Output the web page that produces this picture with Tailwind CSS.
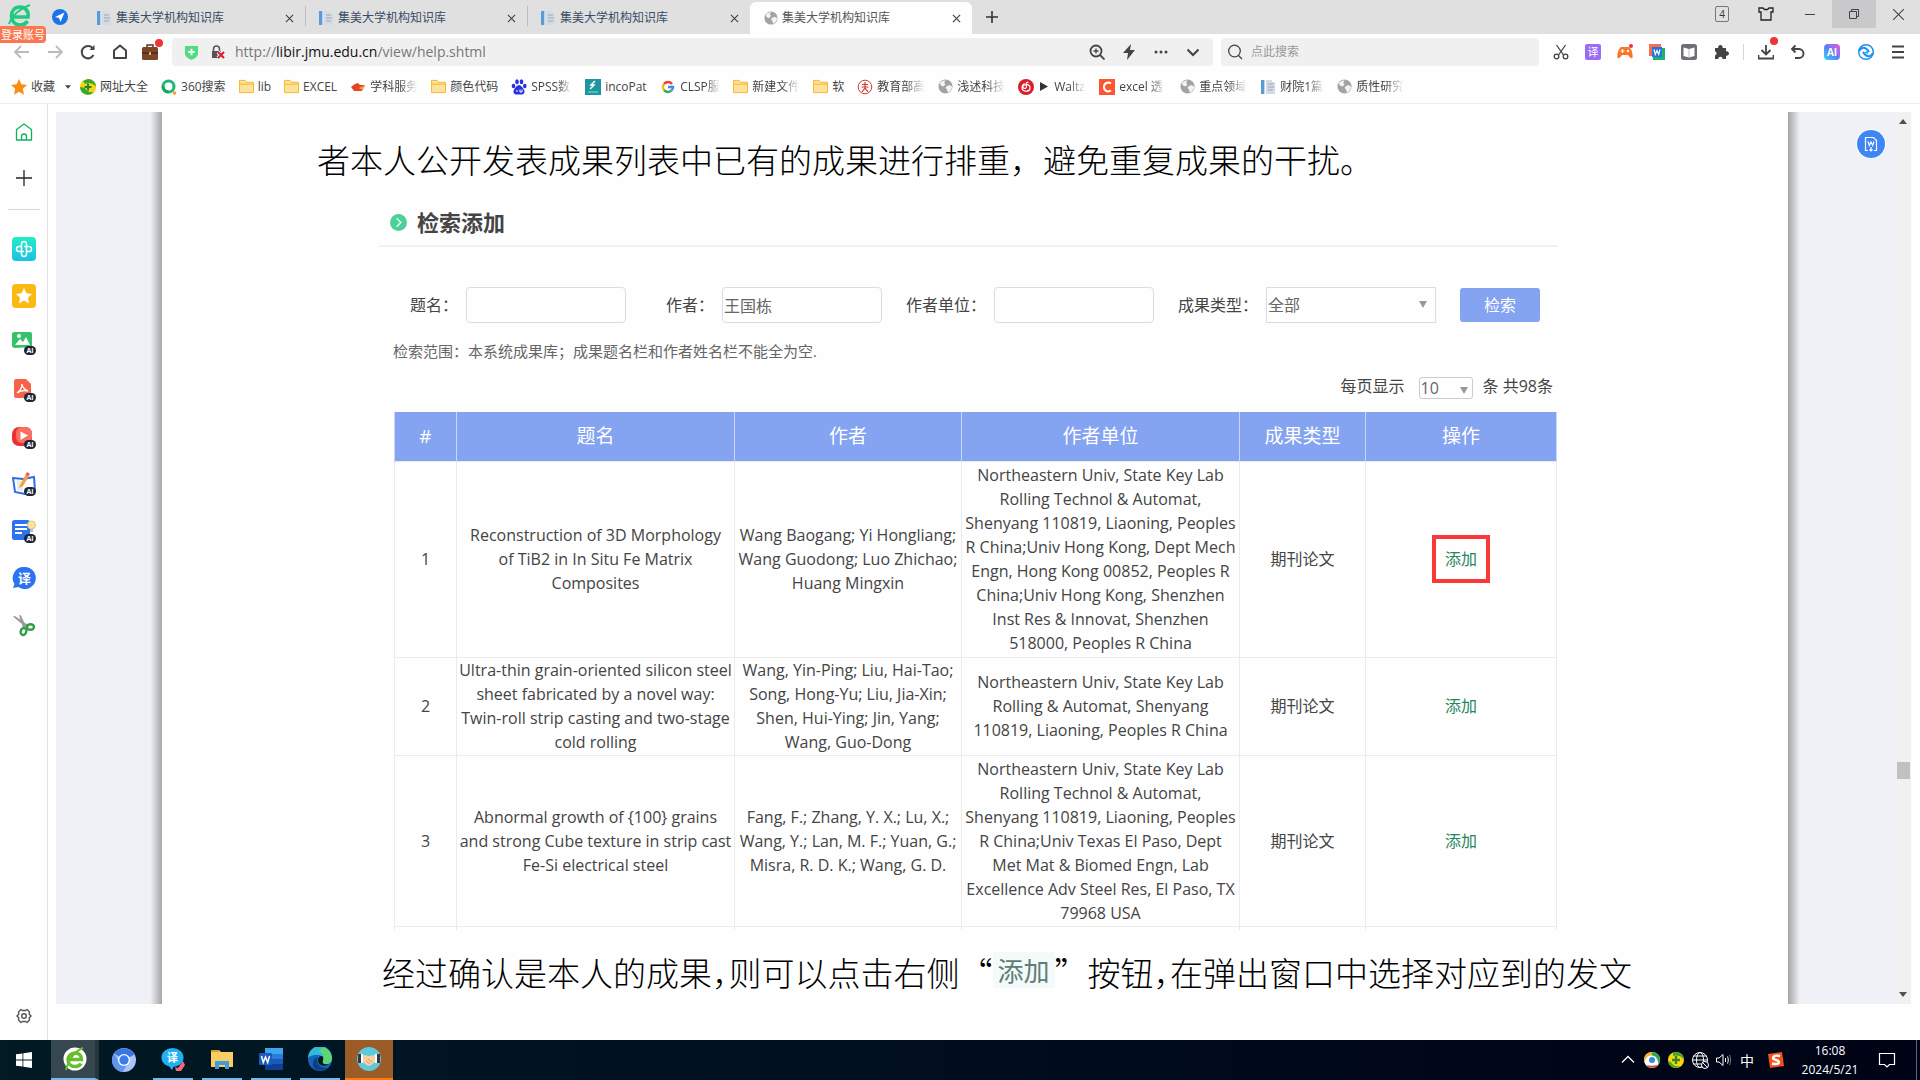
<!DOCTYPE html>
<html lang="zh-CN">
<head>
  <meta charset="UTF-8">
  <meta name="viewport" content="width=device-width, initial-scale=1.0">
  <title>集美大学机构知识库</title>
  <script src="https://cdn.jsdelivr.net/npm/@tailwindcss/browser@4"></script>
</head>
<body class="flex h-screen flex-col overflow-hidden bg-[#fefefe] font-['Open_Sans','Noto_Sans_CJK_SC',sans-serif] text-[#444]">

  <!-- Shared icons -->
  <svg class="hidden">
    <symbol id="i-doc" viewBox="0 0 16 16">
      <path d="M1 1h3v14H1z" fill="#5b9bd5"/><path d="M4 1h1v14H4z" fill="#bcd5ee"/>
      <path d="M6 1h6v2h3v12H6z" fill="#d3dce4"/><path d="M8 5h5M8 8h6M8 11h5" stroke="#98a9b8"/>
    </symbol>
    <symbol id="i-globe" viewBox="0 0 16 16">
      <circle cx="8" cy="8" r="7.500" fill="#a3a3a3"/>
      <path d="M2 4c2-2 4-2.500 6-2.500L6.500 4 8 5.500 6 8 3 7zM9 8l3-1.500 3 1.500c0 3-2 5.500-4.500 6.500L9.500 11 8 9.500z" fill="#f4f4f4"/>
    </symbol>
    <symbol id="i-folder" viewBox="0 0 16 16">
      <path d="M.5 1.500h6l1.500 2h7.500v11H.5z" fill="#fce29a" stroke="#f5b427"/><path d="M.5 5.500h15" stroke="#f5b427"/>
    </symbol>
    <symbol id="i-close" viewBox="0 0 10 10">
      <path d="M1 1l8 8M9 1L1 9" stroke="#444" stroke-width="1.300"/>
    </symbol>
    <symbol id="i-caret" viewBox="0 0 10 6"><path d="M0 0h10L5 6z" fill="currentColor"/></symbol>
  </svg>

  <!-- Tabs -->
  <header class="flex h-[34px] shrink-0 bg-[#e0e0e0] text-[12px] leading-4">
    <div class="relative flex w-[83px] shrink-0 items-center">
      <svg class="absolute left-2 top-1 size-6" viewBox="0 0 24 24" fill="none">
        <path d="M4 13h16c1-6-3-10-8-10-5.500 0-8.500 4-8.500 9S7 21 12 21c4 0 6-1.500 7.500-4" stroke="#1fca7f" stroke-width="3.600"/>
        <path d="M1 20C4 11 13 4 22 1" stroke="#1fca7f" stroke-width="2"/>
      </svg>
      <a href="#" class="absolute left-0 top-[26px] z-10 h-[17px] rounded-r-sm bg-[#fa774f] px-px text-[11px] leading-[17px] text-white">登录账号</a>
      <svg class="absolute left-[52px] top-[9px] size-4" viewBox="0 0 16 16">
        <circle cx="8" cy="8" r="8" fill="#1b73e8"/><path d="M12.500 3.500L3 8l4 1 1.500 4z" fill="#fff"/>
      </svg>
    </div>
    <nav class="flex items-end">
      <a href="#" class="flex h-8 w-[222px] items-center pl-[13px] pr-[11px]"><svg class="size-4 shrink-0"><use href="#i-doc"/></svg><span class="ml-1 flex-1 text-[#3b4a66]">集美大学机构知识库</span><svg class="size-[9px]"><use href="#i-close"/></svg></a>
      <span class="mb-2 -mr-px h-5 w-px bg-[#bdbdbd]"></span>
      <a href="#" class="flex h-8 w-[222px] items-center pl-[13px] pr-[11px]"><svg class="size-4 shrink-0"><use href="#i-doc"/></svg><span class="ml-1 flex-1 text-[#3b4a66]">集美大学机构知识库</span><svg class="size-[9px]"><use href="#i-close"/></svg></a>
      <span class="mb-2 -mr-px h-5 w-px bg-[#bdbdbd]"></span>
      <a href="#" class="flex h-8 w-[223px] items-center pl-[13px] pr-[11px]"><svg class="size-4 shrink-0"><use href="#i-doc"/></svg><span class="ml-1 flex-1 text-[#3b4a66]">集美大学机构知识库</span><svg class="size-[9px]"><use href="#i-close"/></svg></a>
      <a href="#" class="flex h-8 w-[222px] items-center rounded-t-md bg-[#fefefe] pl-[14px] pr-[11px]"><svg class="size-[14px] shrink-0"><use href="#i-globe"/></svg><span class="ml-1 flex-1 text-[#555]">集美大学机构知识库</span><svg class="size-[9px]"><use href="#i-close"/></svg></a>
    </nav>
    <button class="ml-3 flex items-center" aria-label="新标签页"><svg class="size-4" viewBox="0 0 16 16"><path d="M8 2v12M2 8h12" stroke="#333" stroke-width="1.600"/></svg></button>
    <div class="ml-auto flex h-7 items-center">
      <button class="flex w-11 justify-center"><span class="h-4 w-[14px] rounded-xs border border-[#777] text-center text-[10px] leading-[14px] text-[#333]">4</span></button>
      <button class="flex w-11 justify-center" aria-label="皮肤"><svg class="h-[14px] w-4" viewBox="0 0 16 14" fill="none" stroke="#222" stroke-width="1.300"><path d="M1 1h4l1.500 1.500h3L11 1h4v4h-2v8H3V5H1z"/></svg></button>
      <button class="flex w-11 justify-center" aria-label="最小化"><svg class="size-[10px]" viewBox="0 0 10 10"><path d="M0 5.500h10" stroke="#444"/></svg></button>
      <button class="flex h-7 w-11 items-center justify-center bg-[#c9c9cb]" aria-label="还原"><svg class="size-[10px]" viewBox="0 0 10 10" fill="none" stroke="#444"><path d="M.5 2.500h7v7h-7zM2.500 2.500v-2h7v7h-2"/></svg></button>
      <button class="flex w-11 justify-center" aria-label="关闭"><svg class="size-[11px]" viewBox="0 0 10 10"><path d="M0 0l10 10M10 0L0 10" stroke="#444"/></svg></button>
    </div>
  </header>

  <!-- Address bar -->
  <div class="flex h-9 shrink-0 items-center pr-[6px]">
    <div class="flex items-center gap-[15px] pl-[13px]">
      <button aria-label="后退"><svg class="size-[18px]" viewBox="0 0 18 18" fill="none" stroke="#bbb" stroke-width="1.800"><path d="M16 9H2M8 3L2 9l6 6"/></svg></button>
      <button aria-label="前进"><svg class="size-[18px]" viewBox="0 0 18 18" fill="none" stroke="#bbb" stroke-width="1.800"><path d="M2 9h14M10 3l6 6-6 6"/></svg></button>
      <button aria-label="刷新"><svg class="size-[18px]" viewBox="0 0 18 18" fill="none" stroke="#444" stroke-width="2"><path d="M14.500 12A6.200 6.200 0 1 1 14 5.500"/><path d="M15.500 2v5h-5z" fill="#444" stroke="none"/></svg></button>
      <button class="-ml-px" aria-label="主页"><svg class="size-[18px]" viewBox="0 0 18 18" fill="none" stroke="#444" stroke-width="2"><path d="M3 15V7.500L9 2.500l6 5V15z" stroke-linejoin="round"/></svg></button>
      <button class="relative -ml-[3px]" aria-label="工具箱">
        <svg class="size-[18px]" viewBox="0 0 18 18"><path d="M6 5V2h6v3" fill="none" stroke="#5e3320" stroke-width="1.500"/><rect x="1" y="4" width="16" height="13" rx="1.500" fill="#7b452c"/><path d="M1 9h16v2H1z" fill="#55301f"/><path d="M8 9h2v3H8z" fill="#e3b55c"/></svg>
        <span class="absolute -right-1 -top-1 size-2 rounded-full bg-[#f03434]"></span>
      </button>
    </div>
    <div class="ml-[13px] flex h-7 flex-1 items-center rounded-[4px] bg-[#f0f0f0] pl-3 pr-3">
      <svg class="size-[15px]" viewBox="0 0 16 16"><path d="M1 1h14v8c0 3-3 5-7 7-4-2-7-4-7-7z" fill="#4fdc83"/><path d="M8 4v7M4.500 7.500h7" stroke="#fff" stroke-width="2"/></svg>
      <svg class="ml-3 size-[14px]" viewBox="0 0 14 14"><path d="M2.500 6V4a3 3 0 0 1 6 0v2" fill="none" stroke="#555" stroke-width="1.500"/><path d="M1 6h9v7H1z" fill="#555"/><path d="M7 7l6 6M13 7l-6 6" stroke="#f0f0f0" stroke-width="4"/><path d="M7 7l6 6M13 7l-6 6" stroke="#d9202a" stroke-width="2"/></svg>
      <span class="ml-[10px] text-[14px] leading-5 text-[#777]">http://<span class="text-[#111]">libir.jmu.edu.cn</span>/view/help.shtml</span>
      <div class="ml-auto flex items-center gap-4">
        <svg class="size-4" viewBox="0 0 16 16" fill="none" stroke="#444" stroke-width="1.800"><circle cx="7" cy="7" r="5.500"/><path d="M11 11l4.500 4.500"/><path d="M4.500 7h5M7 4.500v5" stroke-width="1.300"/></svg>
        <svg class="size-4" viewBox="0 0 16 16"><path d="M10 0L2 9h5l-1 7 8-10H9z" fill="#444"/></svg>
        <svg class="size-4" viewBox="0 0 16 16" fill="#444"><circle cx="3" cy="8" r="1.500"/><circle cx="8" cy="8" r="1.500"/><circle cx="13" cy="8" r="1.500"/></svg>
        <svg class="size-4" viewBox="0 0 16 16" fill="none" stroke="#444" stroke-width="2"><path d="M2.500 5.500L8 11l5.500-5.500"/></svg>
      </div>
    </div>
    <label class="ml-2 flex h-7 w-[318px] items-center rounded-[4px] bg-[#f0f0f0] pl-[6px]">
      <svg class="size-4" viewBox="0 0 16 16" fill="none" stroke="#444" stroke-width="1.300"><circle cx="7.500" cy="7" r="5.800"/><path d="M11.500 11.500L15 15"/></svg>
      <input type="text" placeholder="点此搜索" aria-label="点此搜索" class="ml-2 flex-1 bg-transparent text-[12px] leading-4 outline-none placeholder:text-[#999]">
    </label>
    <div class="ml-[14px] flex items-center gap-4">
      <svg class="size-4" viewBox="0 0 16 16" fill="none" stroke="#444" stroke-width="1.300"><path d="M3.500 1l7 10M12.500 1l-7 10"/><circle cx="3.500" cy="12.500" r="2.300"/><circle cx="12.500" cy="12.500" r="2.300"/></svg>
      <span class="size-4 rounded-xs bg-[#9a6cf5] text-center text-[11px] leading-4 text-white">译</span>
      <svg class="size-4" viewBox="0 0 16 16"><path d="M4 3h8c3 2 4 8 3.500 11-1.500 1-3-1-4.500-3H5c-1.500 2-3 4-4.500 3C0 11 1 5 4 3z" fill="#fb7427"/><path d="M3.500 7h4M5.500 5v4" stroke="#fff" stroke-width="1.200"/><circle cx="11" cy="7" r="1.200" fill="#fff"/><circle cx="14" cy="2" r="2" fill="#f03434"/></svg>
      <svg class="size-4" viewBox="0 0 16 16"><path d="M0 0h12v12H0z" fill="#f4704e"/><path d="M4 4h12v12H4z" fill="#1db36b"/><path d="M3 3h10v10H3z" fill="#2673e6"/><path d="M5 5.500l1.300 5L8 6.500l1.700 4L11 5.500" fill="none" stroke="#fff" stroke-width="1.200"/></svg>
      <svg class="size-4" viewBox="0 0 16 16"><rect width="16" height="16" rx="2.500" fill="#6c6f75"/><path d="M2.500 3.500L8 5l5.500-1.500V12L8 13.500 2.500 12z" fill="#fff"/><path d="M8 5v8.500" stroke="#bbb"/></svg>
      <svg class="size-4" viewBox="0 0 16 16"><path d="M2 4h3.200a2.300 2.300 0 1 1 4.400 0H13v3.300a2.300 2.300 0 1 1 0 4.400V15H9.600a2.200 2.200 0 0 0-4.400 0H2v-3.500a2.200 2.200 0 0 0 0-4.200z" fill="#444"/></svg>
      <span class="-mx-[2px] h-4 w-px bg-[#d5d5d5]"></span>
      <span class="relative"><svg class="size-4" viewBox="0 0 16 16" fill="none" stroke="#444" stroke-width="1.800"><path d="M8 1v9M3.500 6L8 10.500 12.500 6M.5 11v3.500h15V11"/></svg><i class="absolute -right-1 -top-[7px] size-2 rounded-full bg-[#f03434]"></i></span>
      <svg class="size-4" viewBox="0 0 16 16" fill="none" stroke="#444" stroke-width="1.900"><path d="M5.500 1.500L2 5l3.500 3.500M2 5h7a4.500 4.500 0 0 1 0 9H5"/></svg>
      <span class="ml-[2px] size-4 rounded-[4px] bg-linear-to-bl from-[#e64ad2] via-[#5a7df5] to-[#12d8f0] text-center text-[10px] leading-4 font-bold text-white">AI</span>
      <svg class="ml-[2px] size-4" viewBox="0 0 16 16"><circle cx="8" cy="8" r="7.300" fill="#fff" stroke="#1d8df2" stroke-width="1.400"/><path d="M1 7c3-5 7-4 10 1M15 9c-3 5-7 4-10-1" fill="none" stroke="#1d8df2" stroke-width="2"/><path d="M6 9l4-3v4z" fill="#1ec3e8"/></svg>
      <button class="mr-[8px]" aria-label="菜单"><svg class="size-4" viewBox="0 0 16 16"><path d="M2 2.500h12M2 8h12M2 13.500h12" stroke="#444" stroke-width="2"/></svg></button>
    </div>
  </div>

  <!-- Bookmarks -->
  <nav class="flex h-[34px] shrink-0 items-center gap-[13px] overflow-hidden border-b border-[#ebebeb] pl-[11px] text-[12px] leading-4 whitespace-nowrap">
    <a href="#" class="flex items-center gap-1">
      <svg class="size-4" viewBox="0 0 16 16"><path d="M8 0l2.400 5.300 5.600.6-4.200 3.900 1.200 6L8 12.800 3 15.800l1.200-6L0 5.900l5.600-.6z" fill="#f88f12"/></svg>收藏
      <svg class="ml-[6px] h-1 w-[6px]"><use href="#i-caret"/></svg>
    </a>
    <a href="#" class="-ml-1 flex items-center gap-1"><svg class="size-4" viewBox="0 0 16 16"><circle cx="8" cy="8" r="8" fill="#f8d50c"/><path d="M8 0a8 8 0 0 1 8 8c-3-4-7-5-11-3L3 2zM0 8a8 8 0 0 0 14 5c-4 1-8-1-9-4z" fill="#35a83c"/><path d="M8 4.500v7M4.500 8h7" stroke="#1b8a28" stroke-width="2"/></svg>网址大全</a>
    <a href="#" class="flex items-center gap-1"><svg class="size-4" viewBox="0 0 16 16" fill="none"><circle cx="7.500" cy="7.500" r="5.500" stroke="#1db878" stroke-width="3"/><path d="M2 7.500A5.500 5.500 0 0 0 7.500 13" stroke="#17a05f" stroke-width="3"/><circle cx="13.500" cy="14" r="1.800" fill="#f9a01b"/></svg>360搜索</a>
    <a href="#" class="flex items-center gap-1"><svg class="size-[15px]"><use href="#i-folder"/></svg>lib</a>
    <a href="#" class="flex items-center gap-1"><svg class="size-[15px]"><use href="#i-folder"/></svg>EXCEL</a>
    <a href="#" class="flex items-center gap-1"><svg class="size-4" viewBox="0 0 16 16"><path d="M1 8l4-3 3-1 2 2 5 0-3 6H4z" fill="#e2442c"/><path d="M9 9l6-3-3 5z" fill="#f5a623"/></svg><span class="w-12 [mask-image:linear-gradient(to_right,#000_60%,transparent)]">学科服务</span></a>
    <a href="#" class="flex items-center gap-1"><svg class="size-[15px]"><use href="#i-folder"/></svg><span class="w-12">颜色代码</span></a>
    <a href="#" class="flex items-center gap-1"><svg class="size-4" viewBox="0 0 16 16" fill="#2932e1"><ellipse cx="2.500" cy="7" rx="1.800" ry="2.300"/><ellipse cx="6" cy="2.800" rx="1.800" ry="2.500"/><ellipse cx="10.500" cy="2.800" rx="1.800" ry="2.500"/><ellipse cx="13.800" cy="7" rx="1.800" ry="2.300"/><path d="M8 6c2 0 5 4 5.500 6 .5 3-2 4-5.500 3.500C4.500 16 2 15 2.500 12 3 10 6 6 8 6z"/><path d="M5 12h2M9 10.500v2.500h2v-2.500" stroke="#fff" fill="none"/></svg><span class="w-[41px] [mask-image:linear-gradient(to_right,#000_65%,transparent)]">SPSS数</span></a>
    <a href="#" class="flex items-center gap-1"><svg class="size-4" viewBox="0 0 16 16"><path d="M0 0h16v16H0z" fill="#1c96a0"/><path d="M10 2L6 6h3l-4 4" fill="none" stroke="#fff" stroke-width="1.500"/><path d="M3 13h10" stroke="#8dd"/></svg><span class="w-[42px]">incoPat</span></a>
    <a href="#" class="flex items-center gap-1"><svg class="size-4" viewBox="0 0 16 16" fill="none" stroke-width="2.400"><path d="M12 5A5 5 0 0 0 4 5" stroke="#ea4335"/><path d="M4 5a5 5 0 0 0 0 6" stroke="#fbbc05"/><path d="M4 11a5 5 0 0 0 7.500.5" stroke="#34a853"/><path d="M11.500 11.500A5 5 0 0 0 13 8H8" stroke="#4285f4"/></svg><span class="w-10 [mask-image:linear-gradient(to_right,#000_65%,transparent)]">CLSP服</span></a>
    <a href="#" class="flex items-center gap-1"><svg class="size-[15px]"><use href="#i-folder"/></svg><span class="w-12 [mask-image:linear-gradient(to_right,#000_60%,transparent)]">新建文件</span></a>
    <a href="#" class="flex items-center gap-1"><svg class="size-[15px]"><use href="#i-folder"/></svg>软</a>
    <a href="#" class="flex items-center gap-1"><svg class="size-4" viewBox="0 0 16 16" fill="none" stroke="#cc3b36"><circle cx="8" cy="8" r="6.800"/><path d="M8 3v3M5 5.500h6M4.500 8h7M8 6v4M5 13l3-4 3 4" stroke-width="1.200"/></svg><span class="w-12 [mask-image:linear-gradient(to_right,#000_60%,transparent)]">教育部高</span></a>
    <a href="#" class="flex items-center gap-1"><svg class="size-[15px]"><use href="#i-globe"/></svg><span class="w-12 [mask-image:linear-gradient(to_right,#000_60%,transparent)]">浅述科技</span></a>
    <a href="#" class="flex items-center gap-1"><svg class="size-4" viewBox="0 0 16 16"><circle cx="8" cy="8" r="8" fill="#d81e2a"/><path d="M10.500 3.500C8 2.500 8 5 8.500 8a1.800 1.800 0 1 1-1-2c3-1 5 1 4.500 3.500-1 4-8 3.500-8-1 0-2 1-3.200 2.500-4" fill="none" stroke="#fff" stroke-width="1.200"/></svg><span class="flex w-12 items-center gap-[6px] [mask-image:linear-gradient(to_right,#000_65%,transparent)]"><svg class="ml-[2px] h-[9px] w-2 shrink-0" viewBox="0 0 8 9"><path d="M0 0l8 4.500L0 9z" fill="#333"/></svg>Waltz</span></a>
    <a href="#" class="flex items-center gap-1"><svg class="size-4" viewBox="0 0 16 16"><path d="M0 0h16v16H0z" fill="#fc5531"/><path d="M12 4.500C9 2.500 5 4 5 8s4 5.500 7 3.500" fill="none" stroke="#fff" stroke-width="2"/></svg><span class="w-12 [mask-image:linear-gradient(to_right,#000_60%,transparent)]">excel 透</span></a>
    <a href="#" class="flex items-center gap-1"><svg class="size-[15px]"><use href="#i-globe"/></svg><span class="w-12 [mask-image:linear-gradient(to_right,#000_60%,transparent)]">重点领域</span></a>
    <a href="#" class="flex items-center gap-1"><svg class="size-4"><use href="#i-doc"/></svg><span class="w-11 [mask-image:linear-gradient(to_right,#000_60%,transparent)]">财院1篇</span></a>
    <a href="#" class="flex items-center gap-1"><svg class="size-[15px]"><use href="#i-globe"/></svg><span class="w-12 [mask-image:linear-gradient(to_right,#000_60%,transparent)]">质性研究</span></a>
  </nav>

  <div class="flex min-h-0 flex-1">
    <!-- Side bar -->
    <aside class="flex w-12 shrink-0 flex-col items-center border-r border-[#e2e2e2] pt-[19px] pb-4">
      <svg class="size-[18px]" viewBox="0 0 18 18" fill="none" stroke="#10b35c" stroke-width="1.300"><path d="M1.500 6.500L9 1l7.500 5.500V17h-15z" stroke-linejoin="round"/><path d="M6.500 17v-3.500a2.500 2.500 0 0 1 5 0V17"/></svg>
      <svg class="mt-7 size-[18px]" viewBox="0 0 18 18"><path d="M9 1v16M1 9h16" stroke="#222" stroke-width="1.300"/></svg>
      <span class="mt-[22px] h-px w-8 bg-[#d8d8d8]"></span>
      <div class="mt-[27px] flex flex-col gap-[23px]">
        <svg class="size-6" viewBox="0 0 24 24"><defs><linearGradient id="teal" x2="0" y2="1"><stop stop-color="#1ff0c4"/><stop offset="1" stop-color="#1cc0e8"/></linearGradient></defs><rect width="24" height="24" rx="4" fill="url(#teal)"/><path d="M9.500 9.500V7a2.500 2.500 0 0 1 5 0v7.500H17a2.500 2.500 0 0 0 0-5h-5M9.500 12V9.500H7a2.500 2.500 0 0 0 0 5h5M9.500 12v5a2.500 2.500 0 0 0 5 0v-2.500" fill="none" stroke="#fff" stroke-width="1.500"/></svg>
        <svg class="size-6" viewBox="0 0 24 24"><rect width="24" height="24" rx="4" fill="#fdb913"/><path d="M12 4l2.400 5.300 5.800.6-4.300 3.900 1.200 5.700-5.100-3-5.100 3 1.200-5.700L3.800 9.900l5.800-.6z" fill="#fff"/></svg>
        <svg class="size-6" viewBox="0 0 24 24"><path d="M2 1l16 0c1.500 0 2 1 2 2v13l-17 1c-2 0-3-1-3-3V3c0-1 1-2 2-2z" fill="#35c26b"/><circle cx="7" cy="5" r="2" fill="#fff"/><path d="M3 14l5-6 3 3 3-5 4 8z" fill="#fff"/><rect x="12" y="15" width="12" height="9" rx="4.500" fill="#1d2433"/><text x="14.500" y="22" font-size="7" font-weight="700" fill="#fff">AI</text></svg>
        <svg class="size-6" viewBox="0 0 24 24"><path d="M4 1h10l5 5v14H4c-1 0-2-1-2-2V3c0-1 1-2 2-2z" fill="#f8614a"/><path d="M10 6c0 4-2 7-5 9 3-2 7-3 11-2-3-1-6-4-6-7z" fill="none" stroke="#fff" stroke-width="1.400"/><rect x="12" y="15" width="12" height="9" rx="4.500" fill="#1d2433"/><text x="14.500" y="22" font-size="7" font-weight="700" fill="#fff">AI</text></svg>
        <svg class="size-6" viewBox="0 0 24 24"><rect y="2" width="20" height="19" rx="7" fill="#ee2f33"/><rect x="4" y="2" width="16" height="16" rx="6" fill="#fb7060"/><path d="M8.500 6.500l7.500 4-7.500 4.500z" fill="#fff"/><rect x="12" y="15" width="12" height="9" rx="4.500" fill="#1d2433"/><text x="14.500" y="22" font-size="7" font-weight="700" fill="#fff">AI</text></svg>
        <svg class="size-6" viewBox="0 0 24 24"><path d="M1 6l10 1 11-2 1 14-10 3-10-2z" fill="#fff" stroke="#356be8" stroke-width="2"/><path d="M5 8l6 1v10l-6-1z" fill="#e4ecf8"/><path d="M8 13l6-11 3 2-6 10-4 2z" fill="#f2a23c"/><path d="M13.500 3L15 0l3 2-1.500 2z" fill="#f0516b"/><rect x="12" y="15" width="12" height="9" rx="4.500" fill="#1d2433"/><text x="14.500" y="22" font-size="7" font-weight="700" fill="#fff">AI</text></svg>
        <svg class="size-6" viewBox="0 0 24 24"><rect y="1" width="18" height="20" rx="2.500" fill="#2b73f0"/><path d="M3 6h12M3 10h12M3 14h7" stroke="#fff" stroke-width="1.800"/><circle cx="19.500" cy="6" r="4" fill="#fbe3a6" stroke="#f3c263"/><path d="M18 10h3v3h-3z" fill="#bbb"/><rect x="12" y="15" width="12" height="9" rx="4.500" fill="#1d2433"/><text x="14.500" y="22" font-size="7" font-weight="700" fill="#fff">AI</text></svg>
        <svg class="size-6" viewBox="0 0 24 24"><path d="M12.500 1a11 11 0 1 1-6 20L1 22l1.500-4A11 11 0 0 1 12.500 1z" fill="#2b73f0"/><text x="6" y="16.500" font-size="13" font-weight="700" fill="#fff">译</text></svg>
        <svg class="size-6" viewBox="0 0 24 24" fill="none"><path d="M1 3.500L3 3l13 9-2 2.500zM7 2l2 .5 5 11-3 1.500z" fill="#9b9b9b"/><ellipse cx="11.500" cy="18.500" rx="2.800" ry="3.500" stroke="#2f9e44" stroke-width="2.400" transform="rotate(20 11.500 18.500)"/><ellipse cx="18.500" cy="14" rx="3.500" ry="2.800" stroke="#2f9e44" stroke-width="2.400"/></svg>
      </div>
      <svg class="mt-auto size-4" viewBox="0 0 16 16" fill="none" stroke="#555" stroke-width="1.400"><path d="M5 1.500l1.500 1h3l1.500-1L13.500 4l-.3 2L15 8l-1.800 2 .3 2-2.500 2.500-1.500-1h-3l-1.500 1L2.500 12l.3-2L1 8l1.800-2-.3-2z" stroke-linejoin="round"/><circle cx="8" cy="8" r="2.300"/></svg>
    </aside>

    <!-- Document viewer -->
    <div class="relative mt-2 mb-9 ml-2 mr-[9px] flex min-w-0 flex-1 overflow-hidden bg-[#f0f1f7]">
      <span class="ml-[95px] w-[11px] shrink-0 bg-linear-to-r from-[#ebecf1] to-[#a5a5a9]"></span>
      <main class="min-w-0 flex-1 bg-[#fefefe] pt-[27px]">
        <p class="pl-[155px] font-['Noto_Sans_CJK_SC',serif] text-[33px] leading-10 font-light whitespace-nowrap text-black">者本人公开发表成果列表中已有的成果进行排重，避免重复成果的干扰。</p>

        <section class="mt-[27px] ml-[217px] mr-[230px]">
          <h2 class="flex items-center gap-[10px] border-b-2 border-[#f1f1f1] pb-[7px] pl-[11px] text-[22px] leading-8 font-bold text-[#444]">
            <svg class="size-[17px]" viewBox="0 0 18 18"><circle cx="9" cy="9" r="9" fill="#4fcf99"/><path d="M7 4.500L11.500 9 7 13.500" fill="none" stroke="#d9fff0" stroke-width="1.600"/></svg>
            检索添加
          </h2>

          <form class="mt-10 flex items-center gap-[8px] pl-[31px] text-[16px] leading-6 whitespace-nowrap">
            <label for="title">题名：</label>
            <input id="title" type="text" class="mr-8 h-9 w-40 rounded-[4px] border border-[#dcdcdc] outline-none">
            <label for="author">作者：</label>
            <input id="author" type="text" value="王国栋" class="mr-4 h-9 w-40 rounded-[4px] border border-[#dcdcdc] pl-px text-[#666] outline-none">
            <label for="org">作者单位：</label>
            <input id="org" type="text" class="mr-4 h-9 w-40 rounded-[4px] border border-[#dcdcdc] outline-none">
            <label for="type">成果类型：</label>
            <div class="relative mr-4">
              <select id="type" class="h-9 w-[170px] appearance-none border border-[#dcdcdc] bg-transparent pl-px text-[#666] outline-none"><option>全部</option></select>
              <svg class="pointer-events-none absolute right-[9px] top-[14px] h-[7px] w-2 text-[#999]" viewBox="0 0 8 7"><path d="M0 0h8L4 7z" fill="currentColor"/></svg>
            </div>
            <button type="button" class="h-[34px] w-20 rounded-[3px] bg-[#84a3f0] text-white">检索</button>
          </form>

          <p class="mt-4 pl-[14px] text-[15px] leading-6 text-[#666]">检索范围：本系统成果库；成果题名栏和作者姓名栏不能全为空.</p>

          <div class="mt-[14px] flex h-[22px] items-start justify-end pr-[5px] text-[16px] leading-[18px]">
            <label for="size">每页显示</label>
            <div class="relative ml-[14px] mr-[10px]">
              <select id="size" class="block h-[22px] w-[54px] appearance-none rounded-[3px] border border-[#ccc] bg-transparent pl-px leading-5 text-[#666] outline-none"><option>10</option></select>
              <svg class="pointer-events-none absolute right-[5px] top-[10px] h-[7px] w-2 text-[#999]" viewBox="0 0 8 7"><path d="M0 0h8L4 7z" fill="currentColor"/></svg>
            </div>
            <span>条 共98条</span>
          </div>

          <table class="mt-[13px] ml-[15px] w-[calc(100%-16px)] table-fixed border-collapse text-center text-[16px] leading-6 whitespace-nowrap text-[#444]">
            <colgroup>
              <col class="w-[62px]"><col class="w-[278px]"><col class="w-[227px]"><col class="w-[278px]"><col class="w-[126px]"><col>
            </colgroup>
            <thead class="bg-[#84a3f0] text-[19px] text-white">
              <tr class="h-[49px]">
                <th class="border-x border-[#c9d6f8] font-normal">#</th>
                <th class="border-x border-[#c9d6f8] font-normal">题名</th>
                <th class="border-x border-[#c9d6f8] font-normal">作者</th>
                <th class="border-x border-[#c9d6f8] font-normal">作者单位</th>
                <th class="border-x border-[#c9d6f8] font-normal">成果类型</th>
                <th class="border-x border-[#c9d6f8] font-normal">操作</th>
              </tr>
            </thead>
            <tbody>
              <tr class="h-[196px]">
                <td class="border border-[#ebebeb]">1</td>
                <td class="border border-[#ebebeb]">Reconstruction of 3D Morphology<br>of TiB2 in In Situ Fe Matrix<br>Composites</td>
                <td class="border border-[#ebebeb]">Wang Baogang; Yi Hongliang;<br>Wang Guodong; Luo Zhichao;<br>Huang Mingxin</td>
                <td class="border border-[#ebebeb]">Northeastern Univ, State Key Lab<br>Rolling Technol &amp; Automat,<br>Shenyang 110819, Liaoning, Peoples<br>R China;Univ Hong Kong, Dept Mech<br>Engn, Hong Kong 00852, Peoples R<br>China;Univ Hong Kong, Shenzhen<br>Inst Res &amp; Innovat, Shenzhen<br>518000, Peoples R China</td>
                <td class="border border-[#ebebeb]">期刊论文</td>
                <td class="border border-[#ebebeb]"><a href="#" class="inline-block h-12 w-[58px] border-4 border-[#fb3838] leading-10 text-[#27875c]">添加</a></td>
              </tr>
              <tr class="h-[98px]">
                <td class="border border-[#ebebeb]">2</td>
                <td class="border border-[#ebebeb]">Ultra-thin grain-oriented silicon steel<br>sheet fabricated by a novel way:<br>Twin-roll strip casting and two-stage<br>cold rolling</td>
                <td class="border border-[#ebebeb]">Wang, Yin-Ping; Liu, Hai-Tao;<br>Song, Hong-Yu; Liu, Jia-Xin;<br>Shen, Hui-Ying; Jin, Yang;<br>Wang, Guo-Dong</td>
                <td class="border border-[#ebebeb]">Northeastern Univ, State Key Lab<br>Rolling &amp; Automat, Shenyang<br>110819, Liaoning, Peoples R China</td>
                <td class="border border-[#ebebeb]">期刊论文</td>
                <td class="border border-[#ebebeb]"><a href="#" class="text-[#27875c]">添加</a></td>
              </tr>
              <tr class="h-[171px]">
                <td class="border border-[#ebebeb]">3</td>
                <td class="border border-[#ebebeb]">Abnormal growth of {100} grains<br>and strong Cube texture in strip cast<br>Fe-Si electrical steel</td>
                <td class="border border-[#ebebeb]">Fang, F.; Zhang, Y. X.; Lu, X.;<br>Wang, Y.; Lan, M. F.; Yuan, G.;<br>Misra, R. D. K.; Wang, G. D.</td>
                <td class="border border-[#ebebeb]">Northeastern Univ, State Key Lab<br>Rolling Technol &amp; Automat,<br>Shenyang 110819, Liaoning, Peoples<br>R China;Univ Texas El Paso, Dept<br>Met Mat &amp; Biomed Engn, Lab<br>Excellence Adv Steel Res, El Paso, TX<br>79968 USA</td>
                <td class="border border-[#ebebeb]">期刊论文</td>
                <td class="border border-[#ebebeb]"><a href="#" class="text-[#27875c]">添加</a></td>
              </tr>
              <tr class="h-1">
                <td class="border-x border-[#ebebeb]"></td><td class="border-x border-[#ebebeb]"></td><td class="border-x border-[#ebebeb]"></td><td class="border-x border-[#ebebeb]"></td><td class="border-x border-[#ebebeb]"></td><td class="border-x border-[#ebebeb]"></td>
              </tr>
            </tbody>
          </table>
        </section>

        <p class="mt-[22px] pl-[220px] font-['Noto_Sans_CJK_SC',serif] text-[33px] leading-10 font-light whitespace-nowrap text-black">经过确认是本人的成果<span class="[font-feature-settings:'halt']">，</span>则可以点击右侧“<span class="inline-block w-[62px] bg-[#f3faf9] text-center align-top text-[26px] leading-9 font-normal text-[#5f7d76]">添加</span>”按钮<span class="[font-feature-settings:'halt']">，</span>在弹出窗口中选择对应到的发文</p>
      </main>
      <span class="w-[11px] shrink-0 bg-linear-to-r from-[#a5a5a9] to-[#ebecf1]"></span>
      <div class="w-24 shrink-0"></div>
      <button class="absolute right-[26px] top-[18px] flex size-7 items-center justify-center rounded-full bg-[#3f86f4] ring-1 ring-white" aria-label="转Word">
        <svg class="size-4" viewBox="0 0 16 16" fill="none" stroke="#fff" stroke-width="1.200"><path d="M5 14.500H2.500v-13h8l3 3v10H11M8 11v4M6.500 13.500L8 15l1.500-1.500"/><path d="M5 5.500l1.300 4L8 6l1.700 3.500L11 5.500"/></svg>
      </button>
      <!-- Scroll bar -->
      <div class="relative flex w-4 shrink-0 flex-col items-center justify-between bg-[#f1f1f1] py-[7px] text-[#505050]">
        <svg class="h-[5px] w-2 rotate-180"><use href="#i-caret"/></svg>
        <span class="absolute top-[650px] h-[17px] w-[13px] bg-[#c1c1c1]"></span>
        <svg class="h-[5px] w-2"><use href="#i-caret"/></svg>
      </div>
    </div>
  </div>

  <!-- Task bar -->
  <footer class="flex h-10 shrink-0 items-center bg-linear-to-r from-[#011a24] to-[#000316] text-[12px] text-white">
    <button class="flex h-10 w-[51px] items-center pl-4" aria-label="开始"><svg class="size-4" viewBox="0 0 16 16" fill="#fff"><path d="M0 2.300L6.500 1.400v6.200H0zM7.300 1.300L16 0v7.600H7.300zM0 8.400h6.500v6.200L0 13.700zM7.300 8.400H16V16l-8.700-1.300z"/></svg></button>
    <button class="flex h-10 w-12 items-center justify-center border-r-4 border-b-2 border-r-[#27353c] border-b-[#76b9ed] bg-[#36474f] pl-1" aria-label="浏览器"><svg class="size-6" viewBox="0 0 24 24" fill="none"><circle cx="12" cy="12" r="11.500" fill="#fff"/><path d="M6 12.500h12.500c0-4-2.500-6.500-6.500-6.500s-7 3-7 7 3 6.500 7 6.500c3 0 5-1 6-3" stroke="#69bd2d" stroke-width="3.400"/><path d="M3 23C5 13 12 4 20 1" stroke="#69bd2d" stroke-width="2"/></svg></button>
    <button class="ml-1 flex h-10 w-10 items-center justify-center" aria-label="Chromium"><svg class="ml-[2px] size-6" viewBox="0 0 24 24"><circle cx="12" cy="12" r="12" fill="#a9c5f8"/><path d="M12 12L2 5.500A12 12 0 0 1 22.500 6.500z" fill="#3a76e0"/><path d="M2 5.500A12 12 0 0 0 10.500 24L17 14l-9 1z" fill="#5e95f0"/><circle cx="12" cy="12" r="6" fill="#fff"/><circle cx="12" cy="12" r="4.700" fill="#3b7ded"/></svg></button>
    <div class="ml-[10px] flex gap-[9px]">
      <button class="flex h-10 w-10 items-center justify-center border-b-2 border-[#76b9ed]" aria-label="翻译"><svg class="size-6" viewBox="0 0 24 24"><path d="M14 20l3 1 5-7 2 4-4 6-5 0z" fill="#ef6a7b"/><ellipse cx="11.500" cy="10.500" rx="11" ry="9.500" fill="#22b0f5"/><path d="M7 18l4 5 2-4z" fill="#22b0f5"/><text x="6" y="15" font-size="11" font-weight="700" fill="#fff">译</text></svg></button>
      <button class="flex h-10 w-10 items-center justify-center border-b-2 border-[#76b9ed]" aria-label="文件资源管理器"><svg class="size-6" viewBox="0 0 24 24"><path d="M1 3h8l2 2h12v15H1z" fill="#f9cf63"/><path d="M1 3h8v2H1z" fill="#e39c1f"/><path d="M5 22v-8h14v8h-4v-4H9v4z" fill="#409bdf"/></svg></button>
      <button class="flex h-10 w-10 items-center justify-center border-b-2 border-[#76b9ed]" aria-label="Word"><svg class="size-6" viewBox="0 0 24 24"><path d="M6 1h18v6H6z" fill="#41a5ee"/><path d="M6 7h18v5H6z" fill="#2b7cd3"/><path d="M6 12h18v5H6z" fill="#185abd"/><path d="M6 17h18v6H6z" fill="#103f91"/><rect y="6" width="13" height="12" rx="1" fill="#185abd"/><path d="M2.500 9l1.800 6.500L6.500 10l2.200 5.500L10.500 9" fill="none" stroke="#fff" stroke-width="1.500"/></svg></button>
      <button class="flex h-10 w-10 items-center justify-center border-b-2 border-[#76b9ed]" aria-label="Edge"><svg class="size-6" viewBox="0 0 24 24"><circle cx="12" cy="12" r="12" fill="#1467b8"/><path d="M0 11A12 12 0 0 1 24 11c0 4-3 6-6 6-2.500 0-4-1-3-3 1-4-2-6-5-6C6 8 2 8 0 11z" fill="#31b8dc"/><path d="M15 .5A12 12 0 0 1 24 11c0 4-3 6-6 6-2.500 0-4-1-3-3 2-5-1-9-5-9z" fill="#5fd66f"/><path d="M10 10c-3 5 1 11 8 11 2 0 3-1 4-2-5 6-15 6-17 0-1-4 1-8 5-9z" fill="#0c3f86"/><path d="M14 9c2 2 1 4 .5 5.500C14 17 18 18 21 17c-4 3-11 2-11-4 0-2 2-4 4-4z" fill="#01161f"/></svg></button>
    </div>
    <button class="ml-[5px] flex h-10 w-12 items-center justify-center border-b-2 border-[#ff7b12] bg-[#9b5c27]" aria-label="远程协助"><svg class="size-6" viewBox="0 0 24 24"><circle cx="12" cy="12" r="12" fill="#5bcbdc"/><path d="M1 7h4v9H1zM19 7h4v9h-4z" fill="#333b47"/><path d="M4 7h2v9H4zM18 7h2v9h-2z" fill="#fff"/><path d="M6 8l6 1 6-1v7l-5 4c-3 0-5-2-7-4z" fill="#f7cfa6"/><path d="M9 14l4 3M11 12l4 3" stroke="#d79b6b"/></svg></button>

    <div class="ml-auto flex items-center gap-1">
      <svg class="size-5" viewBox="0 0 20 20"><path d="M4 12.500l6-6 6 6" fill="none" stroke="#fff" stroke-width="1.300"/></svg>
      <svg class="ml-[2px] size-4" viewBox="0 0 16 16"><circle cx="8" cy="8" r="8" fill="#fff"/><path d="M8 0a8 8 0 0 1 8 8c0 2-.5 3-1.500 4.500C14 7 12 4 8 3.500z" fill="#2fa84f"/><path d="M8 0A8 8 0 0 0 .5 10.500C2 5 4 3 8 3.500z" fill="#f9b218"/><path d="M2 13a8 8 0 0 0 12.500-.5C10 14 6 14 2 13z" fill="#e23b30"/><circle cx="8" cy="8" r="3" fill="#2a8fdc"/></svg>
      <svg class="ml-1 size-4" viewBox="0 0 16 16"><circle cx="8" cy="8" r="8" fill="#f8d50c"/><path d="M5 .5A8 8 0 0 1 16 8c-2-4-6-5-11-4zM0 9a8 8 0 0 0 13 5c-5 1-9-1-10-4z" fill="#49a72f"/><path d="M8 4v8M4 8h8" stroke="#2c8a25" stroke-width="2.400"/></svg>
      <svg class="ml-[2px] size-5" viewBox="0 0 20 20" fill="none" stroke="#fff"><circle cx="10" cy="10" r="7.500"/><ellipse cx="10" cy="10" rx="3.500" ry="7.500"/><path d="M2.500 10h15M3.500 6h13M3.500 14h8"/><circle cx="15" cy="15" r="3.500" fill="#000818"/><path d="M12.500 12.500l5 5"/></svg>
      <svg class="size-5" viewBox="0 0 20 20" fill="none" stroke="#fff"><path d="M2.500 8v4h2.500l4 3.500v-11L5 8z"/><path d="M11.500 8v4M13.500 6.500c1 2 1 5 0 7"/><path d="M15.500 5c1.500 3 1.500 7 0 10" stroke="#777"/></svg>
      <span class="ml-[2px] w-[14px] text-center text-[14px]">中</span>
      <svg class="ml-[10px] size-4" viewBox="0 0 16 16"><path d="M0 2L14 0l2 14-14 2z" fill="#f4511e"/><path d="M12 4C8 3 5 4 5 6s6 2 6 4-3 2.500-7 1.500" fill="none" stroke="#fff" stroke-width="2.400"/></svg>
      <time class="ml-1 w-[76px] text-center text-[12px] leading-[19px]">16:08<br>2024/5/21</time>
      <svg class="ml-[6px] size-[18px]" viewBox="0 0 18 18" fill="none" stroke="#fff" stroke-width="1.200"><path d="M1.500 2.500h15v11h-5L9 16l-2.500-2.500h-5z"/></svg>
      <span class="mr-[3px] ml-4 h-10 w-px bg-[#5d6370]"></span>
    </div>
  </footer>
</body>
</html>
